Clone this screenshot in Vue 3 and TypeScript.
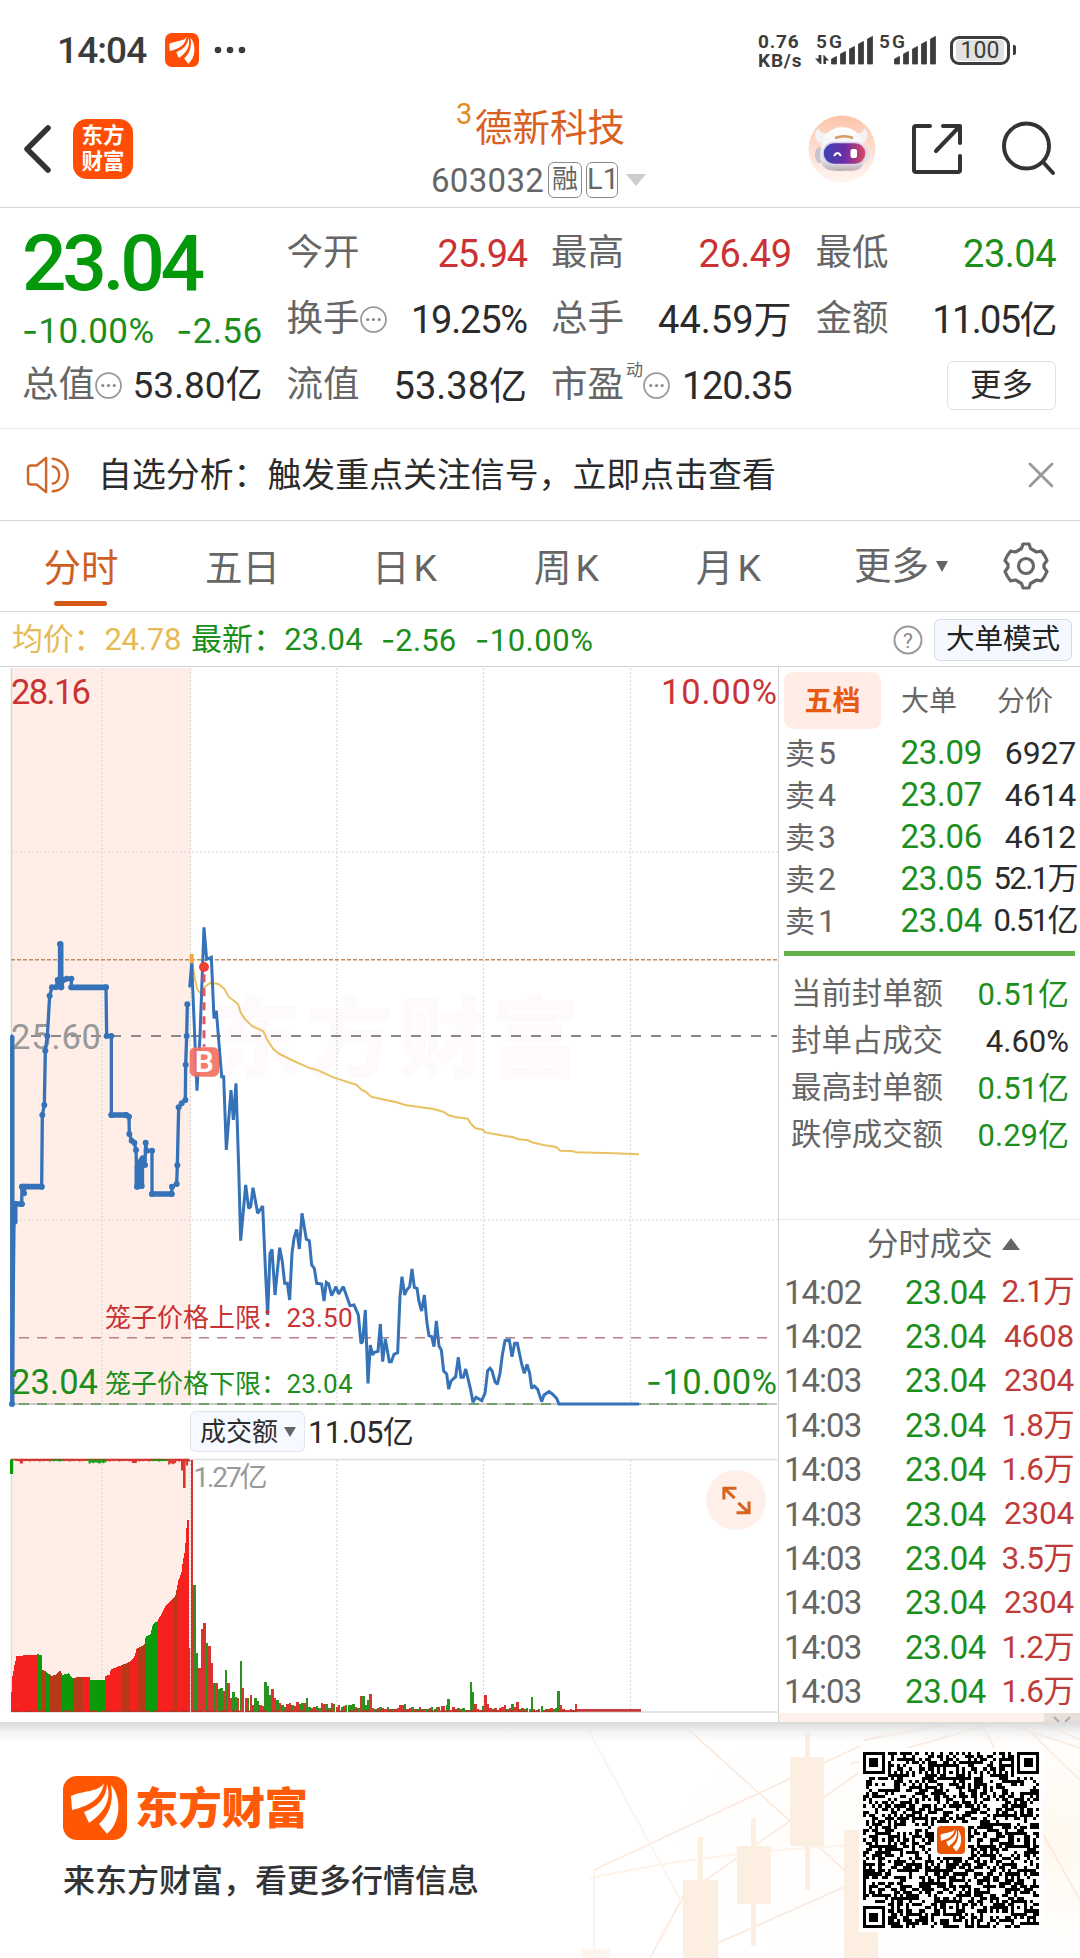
<script setup lang="ts">
interface Cell { label: string; value: string; tone?: string; info?: boolean; sup?: string }

const cells: Cell[] = [
  { label: '今开', value: '25.94', tone: 'up tight' },
  { label: '最高', value: '26.49', tone: 'up snug' },
  { label: '最低', value: '23.04', tone: 'down snug' },
  { label: '换手', value: '19.25%', info: true, tone: 'tight' },
  { label: '总手', value: '44.59万' },
  { label: '金额', value: '11.05亿', tone: 'narrow' },
  { label: '总值', value: '53.80亿', info: true, tone: 'small' },
  { label: '流值', value: '53.38亿' },
  { label: '市盈', value: '120.35', info: true, sup: '动', tone: 'tight' },
]

const tabs = [['五日', ''], ['日', 'K'], ['周', 'K'], ['月', 'K']]

const asks = [
  ['5', '23.09', '6927'],
  ['4', '23.07', '4614'],
  ['3', '23.06', '4612'],
  ['2', '23.05', '52.1万'],
  ['1', '23.04', '0.51亿'],
]

const stats = [
  ['当前封单额', '0.51亿', 'down'],
  ['封单占成交', '4.60%', ''],
  ['最高封单额', '0.51亿', 'down'],
  ['跌停成交额', '0.29亿', 'down'],
]

const trades = [
  ['14:02', '2.1万'],
  ['14:02', '4608'],
  ['14:03', '2304'],
  ['14:03', '1.8万'],
  ['14:03', '1.6万'],
  ['14:03', '2304'],
  ['14:03', '3.5万'],
  ['14:03', '2304'],
  ['14:03', '1.2万'],
  ['14:03', '1.6万'],
]

type Pt = [number, number]
const parse = (s: string, dx = 0): Pt[] =>
  s.trim().split(/\s+/).map((p) => {
    const [x, y] = p.split(',').map(Number)
    return [x + dx, y] as Pt
  })
const join = (pts: Pt[]) => pts.map((p) => p.join(',')).join(' ')

/* Call-auction price, plotted at three units per pixel */
const auction = parse(`36,408 36,1512 42,965 46,912 65,912 66,860 72,880 74,860 125,860 127,645 133,615 136,452 142,408
  149,287 156,262 168,262 173,240 180,236 180,132 182,236 184,262 190,240 200,236 214,236 214,262 318,262 320,408 334,408 334,645 378,645
  387,650 388,702 395,722 403,728 408,750 411,860 418,790 425,858 428,775 435,795 437,728 440,752 456,752 456,882
  515,882 516,860 530,852 532,796 536,622 545,610 556,600 557,494 560,408 562,313`)
const auctionDots = auction.filter((_, i) => i > 0)
const auctionFlats = [
  [42, 912, 66, 912], [66, 860, 125, 860], [214, 262, 318, 262], [334, 645, 380, 645], [456, 882, 515, 882],
  [44, 912, 44, 965], [182, 132, 182, 262], [412, 800, 412, 860], [424, 780, 424, 858],
]

const price = join([
  ...parse(`569,262 575,190 591,572 600,408 612,82 620,178 634,172 642,355 649,332 665,530 671,530 679,750 693,570
    700,660 708,550 716,800 722,1022 737,855 746,925 752,920 759,863 773,940 788,918 797,1125 803,1245 810,1060 816,1048
    825,1185 839,1043 847,1085 854,1150 862,1150 869,1200 876,1060 882,1015 890,988 898,1047 906,940 919,1018 928,1022
    935,1095 943,1105 950,1150 965,1152 972,1203 979,1147 986,1152 995,1187 1008,1160 1016,1182 1030,1160 1050,1217
    1062,1215 1075,1245 1083,1330 1088,1325 1096,1230 1104,1450 1111,1335 1118,1365 1123,1357 1134,1354 1141,1272`),
  ...parse(`8,1385 16,1317 28,1385 34,1385 42,1363 53,1358 60,1190 66,1130 74,1185 80,1170 89,1160 96,1107 103,1162
    111,1165 117,1205 125,1233 133,1185 141,1270 147,1307 155,1310 162,1340 169,1263 177,1338 184,1350 191,1413 200,1422
    206,1467 213,1443 227,1430 235,1372 243,1432 250,1432 257,1407 271,1465 279,1507 288,1492 305,1502 315,1480 323,1412
    330,1405 336,1412 345,1445 352,1453 360,1420 367,1365 375,1322 388,1320 396,1370 404,1330 412,1330 425,1392 433,1420
    441,1393 449,1420 455,1465 463,1458 473,1468 485,1505 492,1485 507,1475 517,1482 530,1495 537,1512 777,1512`, 1140),
])

const average = join([
  ...parse(`575,165 583,230 592,268 602,280 615,260 632,248 655,252 672,265 686,290 714,312 722,338 733,355 755,377
    790,394 803,422 820,447 838,462 875,480 925,503 955,511 1000,532 1070,555 1085,570 1097,575 1113,590`),
  ...parse(`0,596 50,607 75,615 160,627 190,635 205,645 225,651 263,656 272,670 285,684 308,689 318,698 355,704
    400,712 415,718 445,721 455,727 490,735 528,741 541,752 575,753 590,757 700,760 777,763`, 1140),
])

/* Turnover histogram */
const RED = '#f6211f'
const GREEN = '#0a9a0a'
const KX = 780 / 1568
interface Bar { x: number; y: number; h: number; w: number; c: string }

const envelope = parse(`21,930 23,880 25,830 28,805 33,768 78,763 84,766 84.1,808 93,815 103,828 113,824 121,811 126,825 138,820 146,835
  160,830 180,830 182,840 210,840 212,828 220,825 223,808 240,798 262,785 270,770 275,745 290,735 293,708 302,705 307,675
  318,660 332,620 352,590 358,545 365,515 368,480 372,450 376,360 380,360`)
const levelAt = (x: number) => {
  for (let i = 1; i < envelope.length; i++) {
    const [x0, y0] = envelope[i - 1]
    const [x1, y1] = envelope[i]
    if (x <= x1) return y0 + ((y1 - y0) * (x - x0)) / (x1 - x0)
  }
  return 935
}
const toneAt = (x: number, i: number) => {
  if ((x > 76 && x < 84) || (x > 90 && x < 101) || (x > 124 && x < 146) || (x > 180 && x < 211) || (x > 293 && x < 318)) return GREEN
  if ((x >= 84 && x <= 90) || (x >= 101 && x <= 124) || (x >= 146 && x <= 166) || (x > 245 && x < 262) || (x > 276 && x < 293) || (x > 348 && x < 355))
    return i % 2 ? '#b83a18' : '#6e5f14'
  return RED
}
const bars: Bar[] = []
for (let px = 11, i = 0; px < 189; px++, i++) {
  const x = (px + 0.5) / KX
  const y = levelAt(x)
  bars.push({ x: px, y: y / 3, h: (936 - y) / 3, w: 1, c: toneAt(x, i) })
}
const session = `386,180r 391,555g 396,760g 401,805r 406,687r 411,670r 416,730g 421,737r 426,790r 431,850g 435,850r 440,868g 445,865g
  450,873r 454,810g 459,848r 464,893r 469,875g 474,890g 479,893r 484,782g 489,863r 494,893r 499,893g 504,885r 509,915r
  514,893g 519,903g 524,915r 529,918r 534,845g 539,857g 543,885g 548,867r 553,893r 558,900g 563,908r 568,915g 573,920g
  578,912r 583,908r 588,915g 593,918r 598,905r 603,912g 608,910g 612,908r 617,895g 622,920g 627,925r 632,920r 637,918g
  642,923g 647,908r 652,912r 657,911g 662,924g 667,908r 672,912g 677,920r 682,915r 687,920g 691,918r 696,915g 701,915g
  706,914g 711,912g 716,922r 721,924g 726,888r 731,887g 736,915g 741,900g 745,882r 750,925r 755,928g 760,925r 765,922g
  770,924r 775,928r 780,922g 785,926r 790,928g 795,926r 800,924r 805,916r 809,915r 814,912g 819,928r 824,925r 829,920g
  834,928r 839,928g 844,920r 849,926g 854,928r 859,928g 864,925r 869,922g 874,928g 879,920g 883,920r 888,918r 893,917r
  898,915g 902,897g 907,930r 912,920r 917,928r 922,923g 927,928r 932,924g 937,930r 942,930g 947,846g 951,876g 956,911r
  961,926r 966,930r 971,918g 976,884r 981,912r 986,923r 991,928g 996,925r 1001,930r 1005,923r 1010,922r 1015,915r
  1020,926g 1025,923r 1030,912g 1035,920r 1040,906r 1045,926g 1050,923r 1055,928g 1060,925g 1065,926g 1069,892g 1074,928r
  1079,930r 1084,928g 1089,918g 1094,930r 1099,926g 1104,928r 1109,924r 1114,928g 1119,923g 1123,872g 1128,915r 1133,928r
  1138,930r 1143,930r 1148,928r 1153,930r 1158,912r`
for (const token of session.trim().split(/\s+/)) {
  const [xs, rest] = token.split(',')
  const y = parseInt(rest)
  bars.push({ x: Number(xs) * KX - 1.2, y: y / 3, h: (936 - y) / 3, w: 2.4, c: rest.endsWith('g') ? '#2a9320' : '#d93430' })
}
const drops: Bar[] = []
for (let x = 30, i = 0; x < 380; x += 4, i++) {
  const g = (x > 100 && x < 125) || (x > 172 && x < 214) || (x > 305 && x < 335)
  const base = x > 175 && x < 212 ? 8 : x > 335 && x < 352 ? 11 : 2
  const h = Math.max(1.5, (base + ((i * 7) % 5)) / 3)
  drops.push({ x: x * KX, y: 59.5, h, w: 2.1, c: g ? GREEN : '#d93430' })
}
drops.push({ x: 10, y: 59.5, h: 14.5, w: 3.2, c: GREEN })
drops.push({ x: 181, y: 59.5, h: 11, w: 2, c: '#d93430' }, { x: 183, y: 59.5, h: 28.5, w: 2.6, c: '#d93430' }, { x: 186, y: 59.5, h: 6, w: 2, c: '#d93430' })
drops.push({ x: 40 * KX, y: 59.5, h: 4, w: 3, c: '#d93430' }, { x: 265 * KX, y: 59.5, h: 3.5, w: 5, c: '#d93430' })

/* QR code grid */
const N = 57
const finder = (r: number, c: number): boolean | null => {
  for (const [fr, fc] of [[0, 0], [0, N - 7], [N - 7, 0]]) {
    const y = r - fr
    const x = c - fc
    if (y >= -1 && y <= 7 && x >= -1 && x <= 7) {
      if (y < 0 || y > 6 || x < 0 || x > 6) return false
      return y === 0 || y === 6 || x === 0 || x === 6 || (y > 1 && y < 5 && x > 1 && x < 5)
    }
  }
  for (const ar of [6, 28, 50])
    for (const ac of [6, 28, 50]) {
      if ((ar === 6 && ac !== 28) || (ac === 6 && ar !== 28)) continue
      const d = Math.max(Math.abs(r - ar), Math.abs(c - ac))
      if (d <= 2) return d !== 1
    }
  if (r === 6 || c === 6) return (r + c) % 2 === 0
  return null
}
let seed = 603032
const rand = () => {
  seed = (seed * 1103515245 + 12345) % 2147483648
  return seed / 2147483648
}
let qr = ''
for (let r = 0; r < N; r++)
  for (let c = 0; c < N; c++) {
    const dice = rand() < 0.51
    const fixed = finder(r, c)
    const hidden = Math.abs(r - 28) < 6 && Math.abs(c - 28) < 6
    if (!hidden && (fixed ?? dice)) qr += `M${c} ${r}h1v1h-1z`
  }

const signal = [0, 1, 2, 3, 4]
const blades = 'M41 7C36 16 22 14 8 20L9 34C25 30 38 24 41 7ZM44 8C44 22 34 31 21 36L26 47C41 37 49 24 44 8ZM48 9C51 26 46 39 36 48L44 58C58 46 59 22 48 9Z'
</script>

<template>
  <div class="screen">
    <header class="status">
      <span class="clock">14:04</span>
      <svg class="mini" viewBox="0 0 64 64"><rect width="64" height="64" rx="13" fill="#ff4d05" /><path :d="blades" fill="#fff" /></svg>
      <svg class="dots" viewBox="0 0 32 8"><circle cx="4" cy="4" r="3.3" /><circle cx="16" cy="4" r="3.3" /><circle cx="28" cy="4" r="3.3" /></svg>
      <div class="rate"><span>0.76</span><span>KB/s</span></div>
      <svg class="cell" viewBox="0 0 122 34">
        <g fill="#3c3c3c">
          <text x="-1" y="15" class="net" textLength="26">5G</text>
          <text x="62" y="15" class="net" textLength="26">5G</text>
          <path d="M3 31L-2 25.500H1.600V22H4.400V31ZM7 22L12 27.500H9V31H6.400V22Z" />
          <path v-for="i in signal" :key="i" :d="`M${14.5 + i * 9} ${26 - i * 5}l5 -2.6V31h-5z`" stroke="#3c3c3c" stroke-width=".8" stroke-linejoin="round" />
          <path v-for="i in signal" :key="'b' + i" :d="`M${77.500 + i * 9} ${26 - i * 5}l5 -2.6V31h-5z`" stroke="#3c3c3c" stroke-width=".8" stroke-linejoin="round" />
        </g>
      </svg>
      <div class="battery"><span>100</span></div>
      <i class="nub"></i>
    </header>

    <nav class="nav">
      <svg class="back" viewBox="0 0 30 50"><path d="M25 4L4 25L25 46" fill="none" stroke="#333" stroke-width="5.5" stroke-linejoin="round" stroke-linecap="round" /></svg>
      <div class="app-logo"><span>东方</span><span>财富</span></div>
      <div class="title">
        <div class="name"><sup>3</sup>德新科技</div>
        <div class="code">603032<b>融</b><b class="l1">L1</b><i class="caret"></i></div>
      </div>
      <svg class="robot" viewBox="0 0 68 68">
        <defs>
          <linearGradient id="halo" x1="0" y1="0" x2="0" y2="1"><stop offset="0" stop-color="#fcc4a8" /><stop offset=".6" stop-color="#fee3d8" /><stop offset="1" stop-color="#fff5f1" /></linearGradient>
          <linearGradient id="visor"><stop offset="0" stop-color="#3b45b4" /><stop offset=".5" stop-color="#6a2da6" /><stop offset="1" stop-color="#e0485c" /></linearGradient>
          <linearGradient id="shell" x1="0" y1="0" x2="0" y2="1"><stop offset="0" stop-color="#fff" /><stop offset=".7" stop-color="#eeecef" /><stop offset="1" stop-color="#b9aeb4" /></linearGradient>
        </defs>
        <circle cx="34" cy="34" r="33.5" fill="url(#halo)" />
        <ellipse cx="12" cy="40" rx="5" ry="8" fill="#c9c3ca" /><ellipse cx="57" cy="40" rx="5" ry="8" fill="#e8dfe2" />
        <path d="M10 27C5 22 7 16 11 13C12 18 16 19 20 18L16 28ZM57 27C61 22 60 16 56 13C55 18 51 19 47 18L51 28Z" fill="#f5f2f4" />
        <path d="M13 34C13 6 54 4 56 34C60 60 44 55 34 56C22 56 9 56 13 34Z" fill="url(#shell)" />
        <rect x="15" y="27.500" width="43" height="22" rx="11" fill="url(#visor)" stroke="#d9d2ea" stroke-width="1.5" />
        <path d="M26 41Q29.500 35 33 41" fill="none" stroke="#fff" stroke-width="2" />
        <rect x="42.500" y="34" width="6.500" height="9" rx="2" fill="#fff" />
        <path d="M27 23Q36 19.500 45 23" fill="none" stroke="#d89a68" stroke-width="2.600" />
      </svg>
      <svg class="share" viewBox="0 0 54 54" fill="none" stroke="#333" stroke-width="4" stroke-linecap="round" stroke-linejoin="round"><path d="M20 4H6Q4 4 4 6V48Q4 50 6 50H48Q50 50 50 48V34M33 4H50V21M49 5L26 29" /></svg>
      <svg class="search" viewBox="0 0 56 56" fill="none" stroke="#333" stroke-width="4" stroke-linecap="round"><circle cx="25.500" cy="26" r="22.500" /><path d="M42 42L52 53" /></svg>
    </nav>

    <section class="quote">
      <div class="last">
        <strong>23.04</strong>
        <div><span><i class="mn">-</i>10.00%</span><span><i class="mn">-</i>2.56</span></div>
      </div>
      <div v-for="c in cells" :key="c.label" class="kv">
        <span class="k">{{ c.label }}</span>
        <small v-if="c.sup">{{ c.sup }}</small>
        <svg v-if="c.info" class="info" viewBox="0 0 26 26"><circle cx="13" cy="13" r="12" fill="none" stroke="#999" stroke-width="1.7" /><g fill="#888"><circle cx="7.500" cy="13" r="1.500" /><circle cx="13" cy="13" r="1.500" /><circle cx="18.500" cy="13" r="1.500" /></g></svg>
        <span class="v" :class="c.tone">{{ c.value }}</span>
      </div>
      <div class="kv end"><button class="more">更多</button></div>
    </section>

    <section class="notice">
      <svg class="horn" viewBox="0 0 46 40" fill="none" stroke="#cf662a" stroke-width="2.600" stroke-linecap="round" stroke-linejoin="round"><path d="M21 2L11 10H5Q2 10 2 13V27Q2 30 5 30H11L21 38ZM28 11C37 12 37 28 28 29M28 3C49 5 49 36 28 37" /></svg>
      <span>自选分析：触发重点关注信号，立即点击查看</span>
      <svg class="x" viewBox="0 0 26 26"><path d="M2 2L24 24M24 2L2 24" stroke="#999" stroke-width="2.800" stroke-linecap="round" /></svg>
    </section>

    <section class="tabs">
      <span class="on">分时</span>
      <span v-for="t in tabs" :key="t[0]">{{ t[0] }}<em v-if="t[1]">{{ t[1] }}</em></span>
      <span class="drop">更多<i></i></span>
      <svg class="gear" viewBox="0 0 48 48" fill="none" stroke="#666" stroke-width="3.200" stroke-linejoin="round">
        <path d="M19.500 6.500L21 2H27L28.500 6.500L34.500 10L39.500 9.200Q43 13.500 45 18.500L42 22.500V25.500L45 29.500Q43 34.500 39.500 38.800L34.500 38L28.500 41.500L27 46H21L19.500 41.500L13.500 38L8.500 38.800Q5 34.500 3 29.500L6 25.500V22.500L3 18.500Q5 13.500 8.500 9.200L13.500 10Z" />
        <circle cx="24" cy="24" r="7.500" />
      </svg>
    </section>

    <section class="legend">
      <span class="avg">均价：24.78</span>
      <span class="cur">最新：23.04</span>
      <span class="cur chg"><i class="mn">-</i>2.56</span>
      <span class="cur pct"><i class="mn">-</i>10.00%</span>
      <svg class="help" viewBox="0 0 30 30"><circle cx="15" cy="15" r="13.500" fill="none" stroke="#999" stroke-width="2" /><text x="15" y="22.500" text-anchor="middle" font-size="21" fill="#888">?</text></svg>
      <button class="mode">大单模式</button>
    </section>

    <main class="body">
      <div class="charts">
        <svg class="trend" width="778" height="739" viewBox="0 667 778 739">
          <rect x="11" y="668" width="179.500" height="736" fill="#ffeee8" />
          <text x="213" y="1070" class="mark" textLength="366">东方财富</text>
          <g stroke="#d8d8d8" stroke-width="1.200" stroke-dasharray="2 2">
            <path d="M102 668V1404M190.500 668V1404M337 668V1404M483.500 668V1404M630.500 668V1404M12 852H778M12 1220H778" />
          </g>
          <path d="M11.500 668V1404" stroke="#d6d6d6" stroke-width="1.500" />
          <path d="M11 1404H777" stroke="#ccc" stroke-width="2" />
          <path d="M11 959.700H777" stroke="#c08a62" stroke-width="1.600" stroke-dasharray="4 2" />
          <path d="M31 1036H777" stroke="#8b8789" stroke-width="1.800" stroke-dasharray="10 10" />
          <path d="M19 1337.800H770" stroke="#bb8286" stroke-width="1.600" stroke-dasharray="10 8" />
          <path d="M19 1404H770" stroke="#74a071" stroke-width="1.800" stroke-dasharray="10 8" />
          <text x="11" y="704" class="ax up" textLength="80">28.16</text>
          <text x="661" y="704" class="ax up" textLength="116">10.00%</text>
          <text x="11" y="1049" class="ax mid" textLength="90">25.60</text>

          <g transform="translate(0 900) scale(.33333)" fill="none">
            <polyline :points="average" stroke="#e9c062" stroke-width="6" />
            <path d="M575 162V190" stroke="#f0a838" stroke-width="12" />
            <g stroke="#3572b8" stroke-linecap="round" stroke-linejoin="round">
              <polyline :points="join(auction)" stroke-width="10" />
              <path v-for="(f, i) in auctionFlats" :key="i" :d="`M${f[0]} ${f[1]}L${f[2]} ${f[3]}`" stroke-width="17" />
              <path d="M37 408V1512" stroke-width="13" stroke-linecap="butt" />
            </g>
            <circle v-for="(d, i) in auctionDots" :key="i" :cx="d[0]" :cy="d[1]" r="9" fill="#3572b8" />
            <polyline :points="price" stroke="#3572b8" stroke-width="9" stroke-linejoin="miter" stroke-miterlimit="2" />
            <path d="M612 215V440" stroke="#e2575c" stroke-width="9" stroke-dasharray="24 18" stroke-dashoffset="-8" />
            <circle cx="612" cy="201" r="15" fill="#ee4136" />
            <rect x="569" y="442" width="88" height="88" rx="16" fill="#f4705f" fill-opacity=".92" />
          </g>
          <text x="204.300" y="1071.500" text-anchor="middle" class="buy">B</text>

          <text x="105" y="1327" class="cage up">笼子价格上限：</text>
          <text x="286.500" y="1327" class="cage up" textLength="66">23.50</text>
          <text x="105" y="1393" class="cage down">笼子价格下限：</text>
          <text x="286.500" y="1393" class="cage down" textLength="66">23.04</text>
          <text x="11" y="1393.500" class="ax down" textLength="87">23.04</text>
          <text x="646" y="1393.500" class="ax down" textLength="131"><tspan class="mnt">-</tspan>10.00%</text>
        </svg>

        <div class="picker"><button>成交额<i></i></button><span>11.05亿</span></div>

        <div class="volume">
          <svg width="778" height="264" viewBox="0 58 778 264">
            <rect x="11" y="59" width="179.500" height="253" fill="#ffeee8" />
            <path d="M102 60V311M190.500 60V311M337 60V311M483.500 60V311M630.500 60V311" stroke="#d8d8d8" stroke-width="1.200" stroke-dasharray="2 2" />
            <path d="M11 59.500H777M11.500 59V312" stroke="#ddd" stroke-width="1.400" />
            <path d="M11 312H777" stroke="#e2e2e2" stroke-width="2" />
            <path d="M11 59.500H189" stroke="#c93a2c" stroke-width="1.600" />
            <rect v-for="(b, i) in drops" :key="'d' + i" :x="b.x" :y="b.y" :width="b.w" :height="b.h" :fill="b.c" />
            <g shape-rendering="crispEdges"><rect v-for="(b, i) in bars" :key="i" :x="b.x" :y="b.y" :width="b.w" :height="b.h" :fill="b.c" /></g>
            <rect x="188.700" y="248" width="1.500" height="64" fill="#d93430" />
            <rect x="577" y="309" width="64" height="2.800" fill="#c43b3b" />
            <path d="M11 311.300H577" stroke="#b5342a" stroke-width="1.500" stroke-dasharray="9 4" />
            <text x="193.500" y="87" class="peak" textLength="74">1.27亿</text>
          </svg>
          <button class="expand"><svg viewBox="0 0 30 30" fill="none" stroke="#d8631f" stroke-width="3.200"><path d="M2 14V2.300H15M2.500 2.500L13 12.500M28 16V27.700H15M27.500 27.500L17 17.500" /></svg></button>
        </div>
      </div>

      <aside class="side">
        <div class="book-tabs"><span class="on">五档</span><span>大单</span><span>分价</span></div>
        <div v-for="a in asks" :key="a[0]" class="ask"><span class="lv">卖<em>{{ a[0] }}</em></span><span class="p">{{ a[1] }}</span><span class="q" :class="{ cjk: a[2].includes('.') }">{{ a[2] }}</span></div>
        <div class="divider"></div>
        <div class="stats">
          <div v-for="s in stats" :key="s[0]"><span>{{ s[0] }}</span><span class="sv" :class="s[2]">{{ s[1] }}</span></div>
        </div>
        <div class="deals">
          <div class="head">分时成交<i></i></div>
          <div v-for="(t, i) in trades" :key="i" class="deal"><span class="t">{{ t[0] }}</span><span class="p">23.04</span><span class="q" :class="{ cjk: t[1].includes('.') }">{{ t[1] }}</span></div>
        </div>
        <div class="peek"><span></span><i><svg viewBox="0 0 18 5"><path d="M1 0L6 5M17 0L12 5" stroke="#aaa" stroke-width="2" /></svg></i></div>
      </aside>
    </main>

    <footer class="foot">
      <svg class="scene" width="1080" height="236" viewBox="0 1722 1080 236">
        <defs>
          <radialGradient id="glow" cx=".9" cy=".5" r=".7"><stop offset="0" stop-color="#fff8ec" /><stop offset="1" stop-color="#fff" stop-opacity="0" /></radialGradient>
        </defs>
        <rect x="560" y="1722" width="520" height="236" fill="url(#glow)" />
        <g stroke="#fdeade" stroke-width="1.800" fill="none">
          <path d="M680 1722L860 1884M594 1870L860 1746M650 1958L684 1895L860 1772M684 1958L860 1880M864 1740L960 1722M850 1764L1000 1722M1000 1722L1080 1748M1020 1722L1080 1780M980 1722L1080 1900M1040 1722L1080 1740" />
          <path d="M584 1722L683 1905M594 1958V1870M590 1878Q720 1850 860 1845" stroke="#fef3e8" />
        </g>
        <g fill="#fdeee2">
          <path d="M683 1880H718V1958H683ZM698 1837H703V1880H698ZM737 1846H771V1904H737ZM751 1818H756V1846H751ZM751 1904H756V1946H751ZM790 1757H824V1846H790ZM805 1733H810V1757H805ZM805 1846H810V1890H805ZM844 1830H878V1958H844Z" />
          <path d="M582 1949H610V1958H582Z" fill="#fef6ee" />
        </g>
      </svg>
      <div class="brand">
        <div class="row">
          <svg class="big" viewBox="0 0 64 64"><rect width="64" height="64" rx="14" fill="#ff5602" /><path :d="blades" fill="#fff" /></svg>
          <span>东方财富</span>
        </div>
        <p>来东方财富，看更多行情信息</p>
      </div>
      <div class="qr">
        <svg :viewBox="`0 0 ${N} ${N}`" shape-rendering="crispEdges"><path :d="qr" fill="#000" /></svg>
        <svg class="seal" viewBox="0 0 64 64"><rect width="64" height="64" rx="9" fill="#ea5504" /><path :d="blades" fill="#fff" /></svg>
      </div>
    </footer>
  </div>
</template>

<style>
body { background: #fff; }
</style>

<style scoped>
.screen { width: 1080px; height: 1958px; overflow: hidden; display: flex; flex-direction: column; background: #fff; color: #2b2b2b; font-family: Roboto, 'Noto Sans CJK SC', sans-serif; line-height: 1; }
.screen * { box-sizing: border-box; }
button { font: inherit; color: inherit; padding: 0; margin: 0; line-height: 1; }
i, em { font-style: normal; }
svg { display: block; flex: none; overflow: visible; }
.up { color: #c93334; fill: #c93334; }
.down { color: #1b8e1b; fill: #1b8e1b; }
.mn, .mnt { font-family: Inter, sans-serif; }

.status { height: 100px; display: flex; align-items: center; padding-left: 57px; color: #3c3c3c; flex: none; }
.clock { font-size: 37px; font-weight: 500; width: 108px; letter-spacing: -.9px; }
.mini { width: 34px; height: 34px; }
.dots { width: 32px; height: 8px; margin-left: 15px; fill: #3c3c3c; }
.rate { margin-left: 512px; width: 59px; display: flex; flex-direction: column; font-size: 19px; font-weight: 700; line-height: 19px; letter-spacing: .8px; padding-top: 1px; }
.rate span { height: 18.500px; }
.cell { width: 122px; height: 34px; }
.net { font-size: 19px; font-weight: 600; }
.battery { margin-left: 11px; width: 60px; height: 29px; border: 3px solid #3c3c3c; border-radius: 9px; padding: 1px 3px; display: flex; }
.battery span { flex: 1; background: #e2e2e2; border-radius: 3px; font-size: 23px; line-height: 22px; text-align: center; }
.nub { width: 3px; height: 10px; border-radius: 0 2px 2px 0; background: #3c3c3c; margin-left: 3px; }

.nav { height: 108px; flex: none; border-bottom: 1.500px solid #d6d6d6; display: flex; align-items: flex-start; padding-left: 23px; }
.back { width: 30px; height: 50px; margin-top: 24px; }
.app-logo { width: 60px; height: 60px; margin: 19px 0 0 20px; background: #ff4d05; border-radius: 14px; color: #fff; font-size: 21.5px; font-weight: 700; display: flex; flex-direction: column; align-items: center; justify-content: center; line-height: 26px; }
.title { width: 240px; margin: 2px 0 0 298px; display: flex; flex-direction: column; }
.name { height: 54px; display: flex; align-items: center; padding-left: 25px; color: #d9601e; font-size: 37.500px; }
.name sup { width: 19px; font-size: 29px; line-height: 29px; color: #e28c1c; margin-top: -30px; }
.code { height: 48px; display: flex; align-items: center; color: #666; font-size: 33px; letter-spacing: .3px; }
.code b { font-weight: 400; font-size: 26px; width: 34px; height: 36px; border: 1.500px solid #8a8a8a; border-radius: 6px; line-height: 33px; text-align: center; margin-left: 4px; letter-spacing: 0; }
.code .l1 { width: 32px; margin-left: 4px; font-size: 29px; }
.caret { border: 10px solid transparent; border-top: 12px solid #ccc; border-bottom: 0; margin-left: 8px; }
.robot { width: 68px; height: 68px; margin: 15px 0 0 137px; }
.share { width: 54px; height: 54px; margin: 22px 0 0 34px; }
.search { width: 56px; height: 56px; margin: 20px 0 0 37px; }

.quote { height: 221px; flex: none; padding: 12px 24px 0 22px; display: grid; grid-template-columns: repeat(4, 240.500px); column-gap: 24px; grid-template-rows: 66px 66px 66px; border-bottom: 1.500px solid #ececec; }
.last { grid-row: span 2; color: #03990a; }
.last strong { display: block; font-size: 78.500px; font-weight: 500; letter-spacing: -4.300px; height: 86px; line-height: 87px; }
.last div { display: flex; justify-content: space-between; color: #1b8e1b; font-size: 35px; line-height: 48px; letter-spacing: .4px; }
.kv { display: flex; align-items: center; font-size: 38px; padding-top: 1px; }
.k { font-size: 36.500px; color: #666; }
.kv small { font-size: 17px; color: #666; margin: -30px 0 0 2px; align-self: center; }
.info { width: 27px; height: 27px; }
.v { margin-left: auto; }
.snug { letter-spacing: -.500px; }
.tight { letter-spacing: -1.200px; }
.narrow { letter-spacing: -1.600px; }
.small { font-size: 37px; }
.end { justify-content: flex-end; }
.more { width: 109px; height: 49px; border: 1.500px solid #e2e2e2; border-radius: 6px; background: #fff; font-size: 31.500px; padding-top: 1px; }

.notice { height: 92px; flex: none; border-bottom: 1.500px solid #d8d8d8; display: flex; align-items: center; padding: 0 26px 0 25px; font-size: 33.900px; }
.horn { width: 46px; height: 38px; }
.notice span { margin-left: 27px; padding-top: 2px; }
.x { width: 26px; height: 26px; margin-left: auto; }

.tabs { height: 91px; flex: none; border-bottom: 1.500px solid #d8d8d8; display: flex; align-items: center; font-size: 37.500px; color: #666; }
.tabs > span { width: 162px; height: 89px; line-height: 92px; text-align: center; position: relative; }
.tabs > span:not(.on, .drop) { padding-right: 1px; }
.tabs em { margin-left: 4px; }
.tabs .on { color: #cf5e1f; }
.tabs .on::after { content: ''; position: absolute; left: 54px; bottom: 5px; width: 53px; height: 5px; border-radius: 3px; background: #d55a18; }
.tabs .drop { display: flex; align-items: center; justify-content: flex-end; width: 138px; }
.drop i { border: 6.500px solid transparent; border-top: 11px solid #666; border-bottom: 0; margin-left: 7px; }
.gear { width: 48px; height: 48px; margin-left: 54px; }

.legend { height: 55px; flex: none; border-bottom: 1.500px solid #d2d2d2; display: flex; align-items: center; padding: 1px 0 0 12px; font-size: 31px; }
.avg { color: #e6bb55; width: 179px; white-space: nowrap; letter-spacing: -.2px; }
.cur { color: #1b8e1b; width: 190px; letter-spacing: .1px; }
.chg { width: 94px; }
.pct { width: 418px; letter-spacing: .5px; }
.help { width: 30px; height: 30px; }
.mode { margin-left: 11px; width: 138px; height: 42px; background: #f5f8ff; border: 1.500px solid #d6d9e6; border-radius: 6px; font-size: 28.500px; color: #222; padding-top: 1px; }

.body { height: 1055px; flex: none; display: flex; }
.charts { width: 778px; }
.mark { font-size: 88px; font-weight: 900; fill: #fdf9fd; }
.ax { font-size: 34.500px; }
.mid { fill: #999; }
.cage { font-size: 26px; }
.buy { font-size: 30px; font-weight: 600; fill: #fff; }
.picker { height: 52px; display: flex; align-items: center; padding: 0 0 2px 190px; }
.picker button { width: 115px; height: 41px; border: 1.500px solid #e2e4ea; border-radius: 6px; background: #f6f9ff; font-size: 26px; display: flex; align-items: center; padding: 2px 0 0 9px; }
.picker i { border: 6.500px solid transparent; border-top: 10px solid #666; border-bottom: 0; margin-left: 6px; }
.picker span { font-size: 31px; margin-left: 3px; letter-spacing: -.6px; padding-top: 2px; }
.volume { position: relative; height: 264px; }
.peak { font-size: 28px; fill: #999; }
.expand { position: absolute; left: 706px; top: 12px; width: 60px; height: 60px; border-radius: 50%; border: 0; background: #ffefe9; display: flex; align-items: center; justify-content: center; }
.expand svg { width: 29px; height: 29px; }

.side { width: 302px; border-left: 1.500px solid #d2d2d2; display: flex; flex-direction: column; }
.book-tabs { height: 57px; margin: 5px 0 1px 5px; display: flex; align-items: center; font-size: 28px; color: #666; }
.book-tabs span { width: 96px; height: 57px; line-height: 60px; text-align: center; }
.book-tabs .on { background: #ffece4; color: #e85a12; font-weight: 700; border-radius: 9px; width: 97px; }
.ask { height: 42px; display: flex; align-items: center; padding: 3px 4px 0 6px; }
.ask .lv { width: 94px; font-size: 30px; color: #666; }
.lv em { margin-left: 3px; font-size: 32px; }
.ask .p { width: 103px; text-align: right; font-size: 33px; color: #1b8e1b; letter-spacing: -.3px; }
.ask .q { flex: 1; text-align: right; font-size: 32px; letter-spacing: -.2px; white-space: nowrap; }
.ask .q.cjk { font-size: 31px; letter-spacing: -1.600px; margin: 0 -1px 0 -8px; }
.divider { height: 5px; margin: 11px 5px 0; background: #62b048; }
.stats { margin-top: 15px; height: 249px; border-bottom: 1.500px solid #e6e6e6; padding: 0 11px 0 12px; }
.stats div { height: 47px; display: flex; align-items: center; justify-content: space-between; font-size: 30.400px; color: #666; }
.stats .sv { font-size: 31px; color: #2b2b2b; }
.stats .sv.down { color: #1b8e1b; }
.deals { height: 493px; padding: 0 5px; }
.head { height: 49px; display: flex; align-items: center; font-size: 31.400px; color: #666; padding: 1px 0 0 83px; }
.head i { border: 9px solid transparent; border-bottom: 12px solid #666; border-top: 0; margin: -2px 0 0 9px; }
.deal { height: 44.400px; display: flex; align-items: center; font-size: 33px; letter-spacing: -.4px; padding-top: 2px; }
.deal .t { width: 98px; color: #666; letter-spacing: -1px; }
.deal .p { width: 104px; text-align: right; color: #1b8e1b; }
.deal .q { flex: 1; text-align: right; font-size: 31.500px; color: #bf3b38; letter-spacing: -.2px; padding-right: 1px; }
.deal .q.cjk { letter-spacing: -.700px; }
.peek { height: 9px; display: flex; background: #fff0ea; }
.peek span { flex: 1; }
.peek i { width: 36px; background: #e9dfd9; padding: 4px 9px 0; }

.foot { position: relative; height: 236px; flex: none; display: flex; justify-content: space-between; overflow: hidden; }
.foot::before { content: ''; position: absolute; inset: 0 0 auto; height: 20px; background: linear-gradient(#d9d9d9, rgba(235, 235, 235, .6) 50%, rgba(255, 255, 255, 0)); z-index: 1; }
.scene { position: absolute; left: 0; top: 0; }
.brand { position: relative; padding: 54px 0 0 63px; }
.row { display: flex; align-items: center; }
.big { width: 64px; height: 64px; }
.row span { margin-left: 8px; font-size: 43.500px; font-weight: 900; color: #ff5a0a; padding-top: 3px; letter-spacing: -.3px; }
.brand p { margin: 23px 0 0; font-size: 32px; font-weight: 500; line-height: 36px; color: #333; }
.qr { position: relative; width: 184px; height: 184px; margin: 26px 37px 0 0; padding: 4px; background: #fff; }
.qr > svg { width: 176px; height: 176px; }
.qr .seal { position: absolute; left: 78px; top: 78px; width: 28px; height: 28px; }
</style>
